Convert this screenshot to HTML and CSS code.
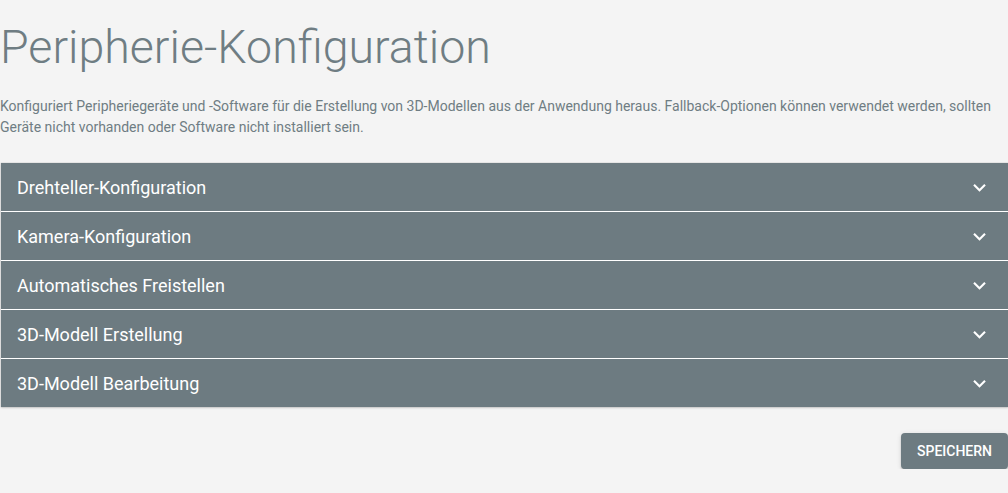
FILE: index.html
```html
<!DOCTYPE html>
<html lang="de">
<head>
<meta charset="utf-8">
<link rel="stylesheet" href="styles.css">
</head>
<body>
<main class="page">
  <h1 class="title">Peripherie-Konfiguration</h1>
  <p class="intro">Konfiguriert Peripheriegeräte und -Software für die Erstellung von 3D-Modellen aus der Anwendung heraus. Fallback-Optionen können verwendet werden, sollten Geräte nicht vorhanden oder Software nicht installiert sein.</p>
  <section class="accordion">
    <div class="panel"><span class="panel-title">Drehteller-Konfiguration</span><svg class="chev" viewBox="0 0 24 24"><path d="M7.41 8.59 12 13.17l4.59-4.58L18 10l-6 6-6-6z"/></svg></div>
    <div class="panel"><span class="panel-title">Kamera-Konfiguration</span><svg class="chev" viewBox="0 0 24 24"><path d="M7.41 8.59 12 13.17l4.59-4.58L18 10l-6 6-6-6z"/></svg></div>
    <div class="panel"><span class="panel-title">Automatisches Freistellen</span><svg class="chev" viewBox="0 0 24 24"><path d="M7.41 8.59 12 13.17l4.59-4.58L18 10l-6 6-6-6z"/></svg></div>
    <div class="panel"><span class="panel-title">3D-Modell Erstellung</span><svg class="chev" viewBox="0 0 24 24"><path d="M7.41 8.59 12 13.17l4.59-4.58L18 10l-6 6-6-6z"/></svg></div>
    <div class="panel"><span class="panel-title">3D-Modell Bearbeitung</span><svg class="chev" viewBox="0 0 24 24"><path d="M7.41 8.59 12 13.17l4.59-4.58L18 10l-6 6-6-6z"/></svg></div>
  </section>
  <div class="actions">
    <button class="save">Speichern</button>
  </div>
</main>
</body>
</html>
```
FILE: styles.css
```css
html, body {
  margin: 0;
  padding: 0;
  background: #f4f4f4;
  font-family: Roboto, "Liberation Sans", sans-serif;
}
.page {
  padding: 0 0 0 1px;
}
.title {
  margin: 0 0 0 -1px;
  padding-top: 20px;
  font-size: 46.5px;
  line-height: 54px;
  font-weight: 300;
  color: #6f7d83;
}
.intro {
  margin: 22px 0 0 -1px;
  font-size: 14px;
  line-height: 21px;
  color: #6f7d83;
}
.accordion {
  margin-top: 25px;
  box-shadow: 0 0 1px rgba(0,0,0,0.3), 0 1px 2px rgba(0,0,0,0.15);
  display: flex;
  flex-direction: column;
  gap: 1px;
  background: #ffffff;
}
.panel {
  height: 48px;
  background: #6d7b81;
  display: flex;
  align-items: center;
  justify-content: space-between;
  padding: 0 16px 0 16px;
  color: #ffffff;
}
.panel-title {
  font-size: 18px;
  font-weight: 400;
}
.chev {
  width: 25px;
  height: 25px;
  fill: #ffffff;
}
.actions {
  display: flex;
  justify-content: flex-end;
  margin-top: 26px;
}
.save {
  height: 36px;
  padding: 0 16px;
  border: none;
  border-radius: 4px;
  background: #6d7b81;
  color: #ffffff;
  font-family: Roboto, "Liberation Sans", sans-serif;
  font-size: 14px;
  font-weight: 500;
  text-transform: uppercase;
  box-shadow: 0 3px 1px -2px rgba(0,0,0,.2), 0 2px 2px 0 rgba(0,0,0,.14), 0 1px 5px 0 rgba(0,0,0,.12);
}
```
